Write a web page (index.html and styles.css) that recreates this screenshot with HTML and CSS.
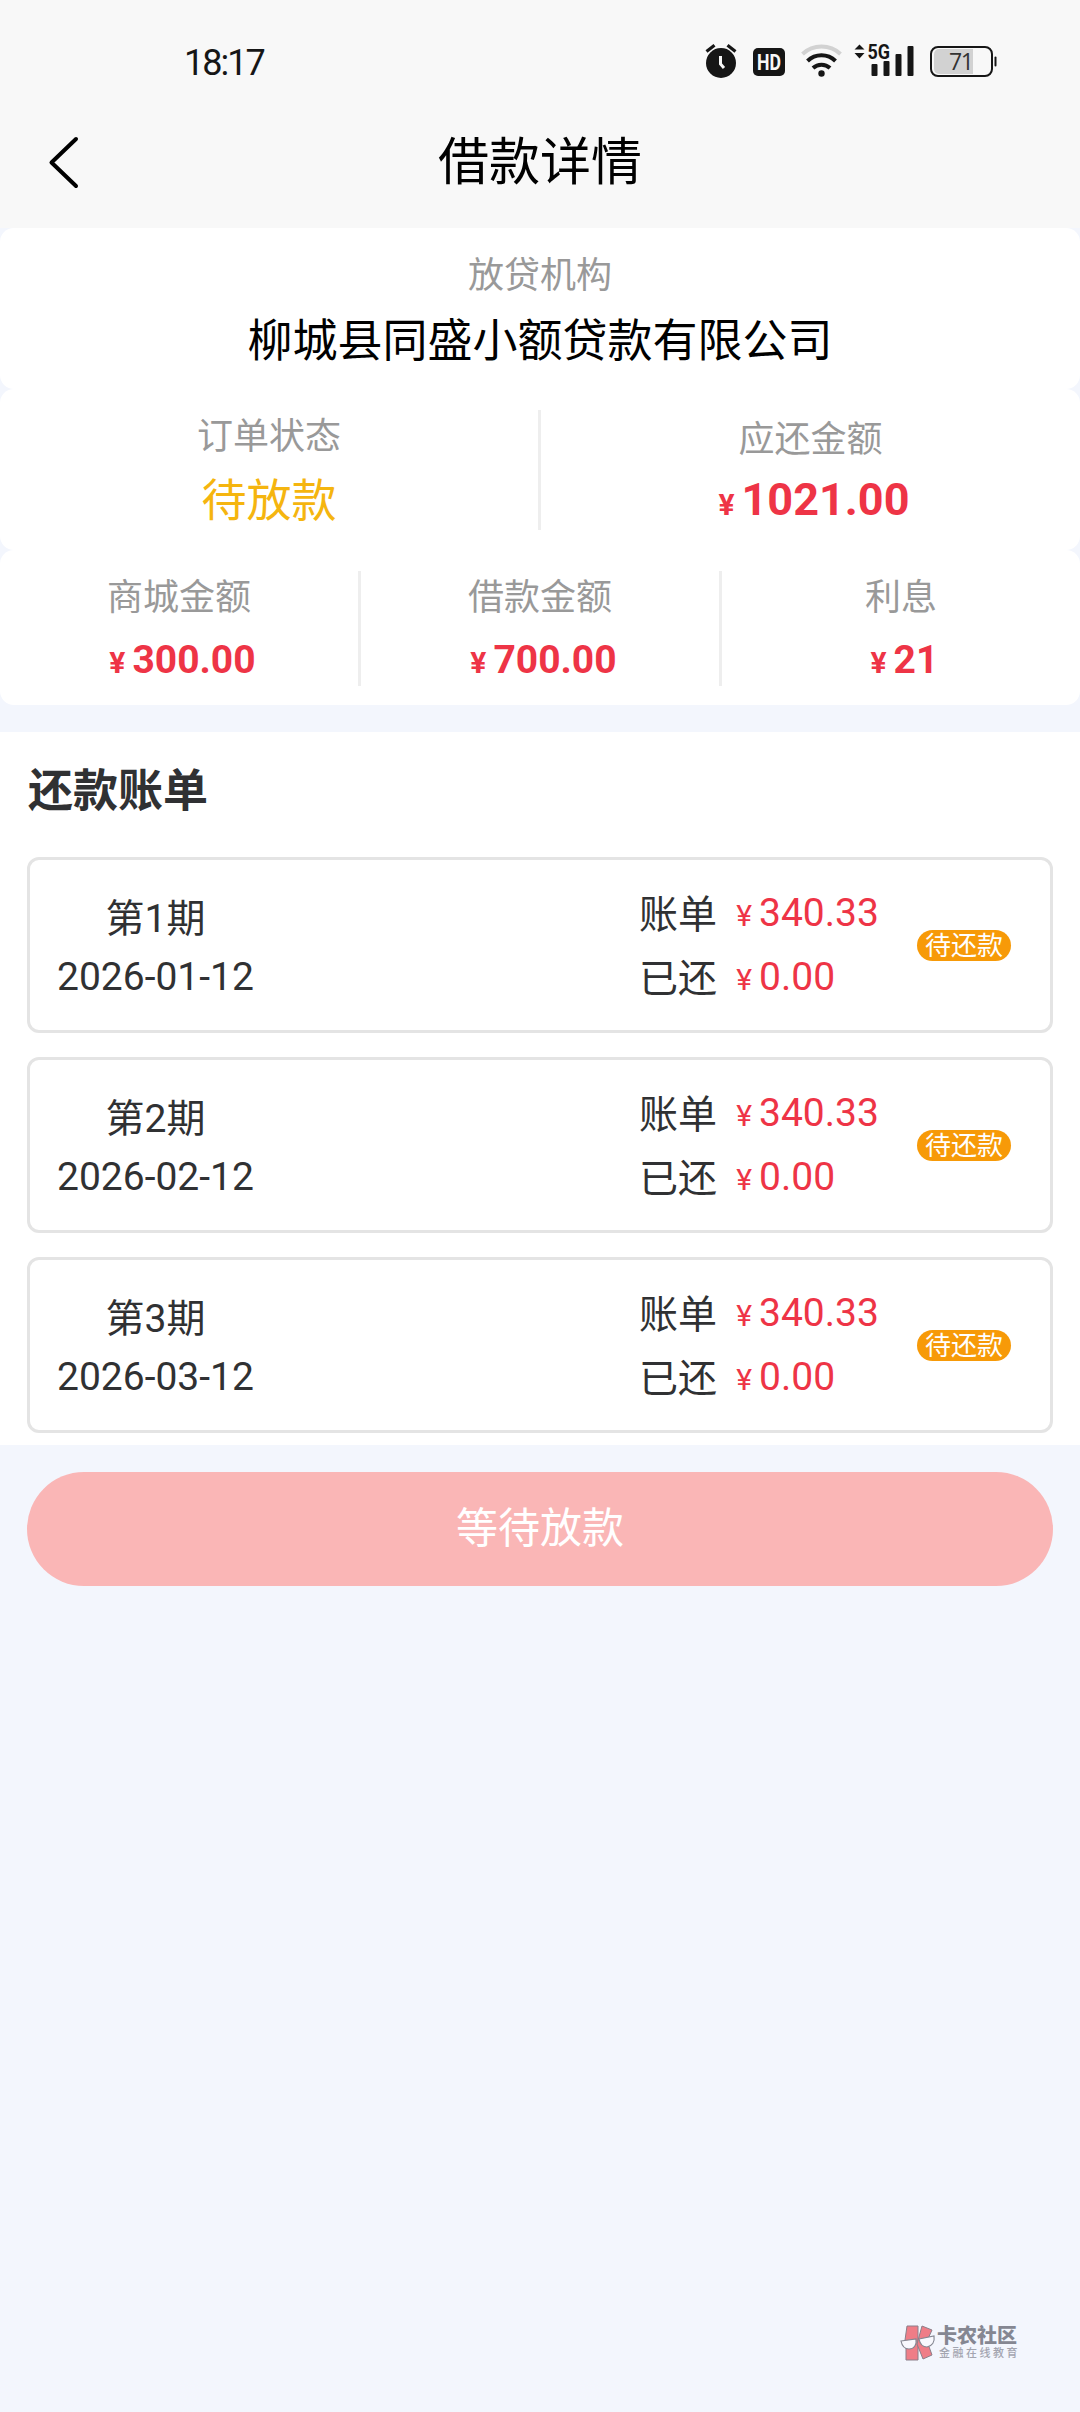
FILE: index.html
```html
<!DOCTYPE html>
<html lang="zh-CN">
<head>
<meta charset="utf-8">
<title>借款详情</title>
<link rel="stylesheet" href="styles.css">
</head>
<body>
<div class="page">
  <header class="header">
    <div class="status-bar">
      <span class="clock">18:17</span>
      <svg class="status-icons" width="300" height="40" viewBox="700 40 300 40">
        <circle cx="721" cy="63" r="15" fill="#161616"/>
        <path d="M706.5 51.5l8-6.2M735.500 51.500l-8-6.200" stroke="#161616" stroke-width="3.200" fill="none"/>
        <path d="M720.500 56v8l3.500 4" stroke="#f8f8f8" stroke-width="3" fill="none"/>
        <rect x="753" y="48" width="32" height="28" rx="5" fill="#161616"/>
        <text class="hd" x="757" y="70" textLength="24" lengthAdjust="spacingAndGlyphs">HD</text>
        <g fill="none" stroke-width="4">
          <path d="M802.500 54a28 28 0 0 1 38 0" stroke="#d2d2d2"/>
          <path d="M807.500 61a20 20 0 0 1 28 0" stroke="#161616"/>
          <path d="M813 68a12.500 12.500 0 0 1 17 0" stroke="#161616"/>
        </g>
        <circle cx="821.500" cy="73.500" r="3.200" fill="#161616"/>
        <path d="M859.500 44.500l5 5h-10zM859.500 58.500l5-5.500h-10z" fill="#161616"/>
        <text class="net" x="867.500" y="59" textLength="22.500" lengthAdjust="spacingAndGlyphs">5G</text>
        <g fill="#161616">
          <rect x="871.500" y="64" width="6" height="12" rx="1"/>
          <rect x="883.500" y="61" width="6" height="15" rx="1"/>
          <rect x="895.500" y="54" width="6" height="22" rx="1"/>
          <rect x="907.500" y="46" width="6" height="30" rx="1"/>
        </g>
        <rect x="931" y="47" width="61" height="29" rx="7" fill="none" stroke="#161616" stroke-width="2"/>
        <path d="M939 49h34v25h-34a5 5 0 0 1-5-5v-15a5 5 0 0 1 5-5z" fill="#d2d2d2"/>
        <rect x="994.500" y="56.500" width="2" height="10" rx="1" fill="#161616"/>
        <text class="level" x="949" y="70" textLength="25">71</text>
      </svg>
    </div>
    <nav class="nav">
      <svg class="back" width="32" height="54" viewBox="0 0 32 54"><path d="M28 4L3.500 27.500L28 51" fill="none"/></svg>
      <h1 class="title">借款详情</h1>
    </nav>
  </header>

  <section class="panel lender">
    <div class="label">放贷机构</div>
    <div class="value">柳城县同盛小额贷款有限公司</div>
  </section>

  <section class="panel order">
    <div class="cell">
      <div class="label">订单状态</div>
      <div class="value pending">待放款</div>
    </div>
    <div class="cell due">
      <div class="label">应还金额</div>
      <div class="amount"><span class="yen">¥</span>1021.00</div>
    </div>
  </section>

  <section class="panel detail">
    <div class="cell"><div class="label">商城金额</div><div class="amount"><span class="yen">¥</span>300.00</div></div>
    <div class="cell"><div class="label">借款金额</div><div class="amount"><span class="yen">¥</span>700.00</div></div>
    <div class="cell"><div class="label">利息</div><div class="amount"><span class="yen">¥</span>21</div></div>
  </section>

  <section class="bills">
    <h2 class="heading">还款账单</h2>
    <article class="bill">
      <div class="period"><div>第1期</div><div>2026-01-12</div></div>
      <div class="sums">
        <div class="sum"><span class="sum-label">账单</span><span class="sum-value"><span class="yen">¥</span>340.33</span></div>
        <div class="sum"><span class="sum-label">已还</span><span class="sum-value"><span class="yen">¥</span>0.00</span></div>
      </div>
      <span class="tag">待还款</span>
    </article>
    <article class="bill">
      <div class="period"><div>第2期</div><div>2026-02-12</div></div>
      <div class="sums">
        <div class="sum"><span class="sum-label">账单</span><span class="sum-value"><span class="yen">¥</span>340.33</span></div>
        <div class="sum"><span class="sum-label">已还</span><span class="sum-value"><span class="yen">¥</span>0.00</span></div>
      </div>
      <span class="tag">待还款</span>
    </article>
    <article class="bill">
      <div class="period"><div>第3期</div><div>2026-03-12</div></div>
      <div class="sums">
        <div class="sum"><span class="sum-label">账单</span><span class="sum-value"><span class="yen">¥</span>340.33</span></div>
        <div class="sum"><span class="sum-label">已还</span><span class="sum-value"><span class="yen">¥</span>0.00</span></div>
      </div>
      <span class="tag">待还款</span>
    </article>
  </section>

  <button class="submit" type="button" disabled>等待放款</button>

  <footer class="brand">
    <svg class="brand-logo" width="36" height="38" viewBox="0 0 36 38">
      <g fill="#ef7d87" stroke="#8b7f8a" stroke-width="1">
        <path d="M7 2h11v34H6V21L5 16z"/>
        <path d="M22 2l10 4-5 11 5 14-9 4-6-15z"/>
      </g>
      <g fill="#f8f9fe" stroke="#858792" stroke-width="1.200">
        <path d="M1 17l15-2c1 6-2 10-7 10-4 0-7-3-8-8z"/>
        <path d="M19 15l15-3c1 6-2 10-7 11-4 0-7-3-8-8z"/>
      </g>
    </svg>
    <div class="brand-text">
      <div class="brand-name">卡农社区</div>
      <div class="brand-sub">金融在线教育</div>
    </div>
  </footer>
</div>
</body>
</html>
```
FILE: styles.css
```css
* { box-sizing: border-box; }

body {
  margin: 0;
  background: #f3f6fd;
  color: #303133;
  font-family: Roboto, "Noto Sans CJK SC", sans-serif;
}

.page {
  display: flex;
  flex-direction: column;
  width: 1080px;
  height: 2412px;
}

.header { height: 228px; background: #f8f8f8; }

.status-bar {
  display: flex;
  justify-content: space-between;
  height: 96px;
  padding: 40px 80px 0 184px;
}

.clock {
  color: #161616;
  font-size: 36px;
  line-height: 46px;
  letter-spacing: -2px;
}

.hd { fill: #f8f8f8; font-size: 22px; font-weight: 700; }
.net { fill: #161616; font-size: 20px; font-weight: 700; }
.level { fill: #333; font-family: "Open Sans", sans-serif; font-size: 23px; }

.nav {
  display: grid;
  grid-template-columns: 80px 1fr 80px;
  align-items: center;
  height: 132px;
}

.back { margin-left: 48px; stroke: #000; stroke-width: 4; stroke-linecap: round; stroke-linejoin: round; }

.title {
  margin: 0;
  padding-top: 2px;
  color: #000;
  font-size: 51px;
  font-weight: 400;
  line-height: 130px;
  text-align: center;
}

.panel { background: #fff; border-radius: 14px; text-align: center; }
.label { color: #999; font-size: 36px; line-height: 54px; }
.value { color: #000; font-size: 45px; line-height: 76px; }
.value.pending { color: #f5b50f; }

.amount { color: #ee3446; font-size: 39px; font-weight: 700; line-height: 71px; }
.yen { display: inline-block; width: 30px; font-size: 30px; text-align: center; }

.lender { height: 161px; padding-top: 21px; }
.lender .value { line-height: 78px; }

.order { display: grid; grid-template-columns: 538px 1fr; height: 161px; padding: 21px 0 20px; }
.order .cell { height: 120px; }
.order .pending { line-height: 76px; }
.order .due { padding-top: 3px; border-left: 3px solid #eee; }
.order .amount { font-size: 45px; line-height: 66px; }

.detail { display: grid; grid-template-columns: 361px 361px 1fr; height: 155px; padding: 21px 0 19px; }
.detail .cell { height: 115px; }
.detail .cell:not(:last-child) { border-right: 3px solid #eee; }

.bills {
  display: flex;
  flex-direction: column;
  gap: 24px;
  height: 713px;
  margin-top: 27px;
  padding: 21px 27px 12px;
  background: #fff;
}

.heading { margin: 0 0 3px 1px; font-size: 45px; font-weight: 700; line-height: 77px; }

.bill {
  display: flex;
  align-items: center;
  height: 176px;
  padding: 0 39px 0 27px;
  border: 3px solid #e4e4e4;
  border-radius: 12px;
  font-size: 39px;
}

.period { padding-top: 5px; line-height: 58px; text-align: center; }
.sums { width: 240px; margin-left: auto; }
.sum { display: flex; gap: 12px; height: 64px; }
.sum-label { line-height: 69px; }
.sum-value { color: #ee3446; line-height: 64px; }

.tag {
  width: 94px;
  height: 31px;
  margin-left: 38px;
  border-radius: 16px;
  background: #f79a08;
  color: #fff;
  font-size: 26px;
  line-height: 32px;
  text-align: center;
}

.submit {
  height: 114px;
  margin: 27px 27px 0;
  padding: 0;
  border: 0;
  border-radius: 57px;
  background: #fab6b6;
  color: #fff;
  font-family: inherit;
  font-size: 42px;
  line-height: 114px;
}

.brand {
  display: flex;
  gap: 1px;
  margin-top: auto;
  padding: 0 60px 50px 900px;
}

.brand-text { white-space: nowrap; }
.brand-name { color: #858792; font-size: 20px; font-weight: 900; line-height: 24px; }
.brand-sub { padding-left: 2px; color: #a3a5b0; font-size: 11px; font-weight: 500; line-height: 11px; letter-spacing: 2.500px; }
```
